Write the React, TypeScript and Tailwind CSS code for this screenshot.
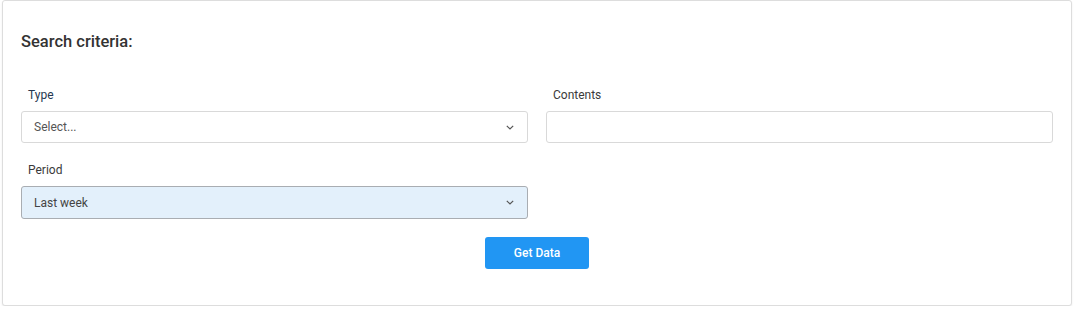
import React from "react";

const Chevron = () => (
  <svg width="8" height="5" viewBox="0 0 8 5" fill="none" aria-hidden="true">
    <path d="M0.8 0.8 L4 4 L7.2 0.8" stroke="#555" strokeWidth="1.2" />
  </svg>
);

const Field = ({
  label,
  labelClass = "text-[#3a3a3a]",
  children,
}: {
  label: string;
  labelClass?: string;
  children: React.ReactNode;
}) => (
  <div className="flex flex-col">
    <label className={`mb-[8px] pl-[7px] text-[12px] leading-[16px] ${labelClass}`}>{label}</label>
    {children}
  </div>
);

export default function App() {
  return (
    <div className="bg-white px-[2px] font-['Roboto',sans-serif]">
      <div className="rounded-[3px] border border-[#dddddd] bg-white px-[18px] pb-[36px] pt-[29px] shadow-[0_1px_2px_rgba(0,0,0,0.08)]">
        <h2 className="text-[16.5px] font-medium leading-[24px] text-[#333]">Search criteria:</h2>

        <div className="mt-[33px] grid grid-cols-2 gap-x-[18px] gap-y-[19px]">
          <Field label="Type" labelClass="text-[#263850]">
            <div className="flex h-[32px] items-center justify-between rounded-[3px] border border-[#d9d9d9] bg-white pl-[12px] pr-[13px] text-[12px] text-[#555]">
              <span>Select...</span>
              <Chevron />
            </div>
          </Field>
          <Field label="Contents">
            <input className="h-[32px] rounded-[3px] border border-[#d9d9d9] bg-white px-[12px] text-[12px] outline-none" />
          </Field>
          <Field label="Period">
            <div className="flex h-[33px] items-center justify-between rounded-[3px] border border-[#a9adb2] bg-[#e3f0fb] pl-[12px] pr-[13px] text-[12px] text-[#444]">
              <span>Last week</span>
              <Chevron />
            </div>
          </Field>
        </div>

        <div className="mt-[18px] flex justify-center">
          <button className="h-[32px] w-[104px] rounded-[3px] bg-[#2196f3] text-[12px] font-medium text-white">
            Get Data
          </button>
        </div>
      </div>
    </div>
  );
}
